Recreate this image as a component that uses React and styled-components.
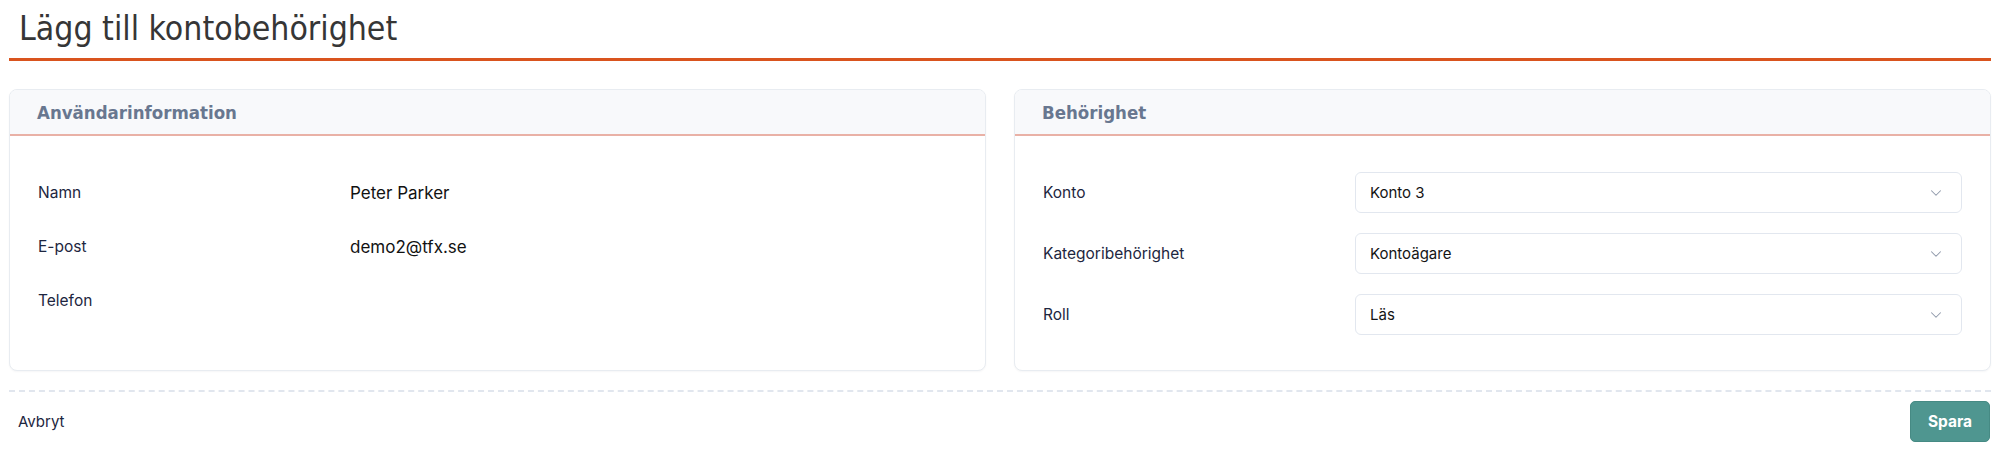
import React from 'react';
import styled, { createGlobalStyle } from 'styled-components';
import { ChevronDown } from 'lucide-react';

const GlobalStyle = createGlobalStyle`
  * { box-sizing: border-box; }
  body {
    margin: 0;
    background: #ffffff;
    font-family: Inter, "Noto Sans", sans-serif;
  }
`;

const userInfo = [
  { label: 'Namn', value: 'Peter Parker' },
  { label: 'E-post', value: 'demo2@tfx.se' },
  { label: 'Telefon', value: '' },
];

const permissions = [
  { label: 'Konto', value: 'Konto 3' },
  { label: 'Kategoribehörighet', value: 'Kontoägare' },
  { label: 'Roll', value: 'Läs' },
];

function App() {
  return (
    <Page>
      <GlobalStyle />
      <Title>Lägg till kontobehörighet</Title>
      <Cards>
        <Card>
          <CardHeader>Användarinformation</CardHeader>
          <CardBody $gap={13}>
            {userInfo.map((row) => (
              <Row key={row.label}>
                <Label>{row.label}</Label>
                <Value>{row.value}</Value>
              </Row>
            ))}
          </CardBody>
        </Card>
        <Card>
          <CardHeader>Behörighet</CardHeader>
          <CardBody $gap={20}>
            {permissions.map((row) => (
              <Row key={row.label}>
                <Label>{row.label}</Label>
                <Select>
                  <span>{row.value}</span>
                  <ChevronDown size={18} strokeWidth={1.4} color="#8f99aa" />
                </Select>
              </Row>
            ))}
          </CardBody>
        </Card>
      </Cards>
      <Footer>
        <CancelLink>Avbryt</CancelLink>
        <SaveButton>Spara</SaveButton>
      </Footer>
    </Page>
  );
}

const Page = styled.div`
  padding: 0 9px;
`;

const Title = styled.h1`
  margin: 0;
  padding: 9px 10px 9px;
  line-height: 40px;
  font-family: "DejaVu Sans Condensed", "DejaVu Sans", sans-serif;
  font-stretch: condensed;
  font-weight: 400;
  font-size: 33.5px;
  color: #363636;
  border-bottom: 3px solid #d9541e;
`;

const Cards = styled.div`
  margin-top: 28px;
  display: grid;
  grid-template-columns: 1fr 1fr;
  gap: 28px;
`;

const Card = styled.section`
  border: 1px solid #e8ecf1;
  border-radius: 8px;
  background: #ffffff;
  box-shadow: 0 1px 2px rgba(15, 23, 42, 0.04);
  overflow: hidden;
`;

const CardHeader = styled.h2`
  margin: 0;
  height: 46px;
  padding: 0 27px;
  display: flex;
  align-items: center;
  background: #f8f9fb;
  border-bottom: 2px solid #e9b1a6;
  font-family: "DejaVu Sans Condensed", "DejaVu Sans", sans-serif;
  font-stretch: condensed;
  font-weight: 700;
  font-size: 18.5px;
  color: #687790;
`;

const CardBody = styled.div`
  padding: 36px 28px 35px;
  display: flex;
  flex-direction: column;
  gap: ${(p) => p.$gap}px;
`;

const Row = styled.div`
  display: grid;
  grid-template-columns: 312px 1fr;
  align-items: center;
  min-height: 41px;
`;

const Label = styled.div`
  font-size: 15.5px;
  color: #1d2640;
`;

const Value = styled.div`
  font-size: 17px;
  color: #121212;
`;

const Select = styled.div`
  height: 41px;
  padding: 0 16px 0 14px;
  display: flex;
  align-items: center;
  justify-content: space-between;
  border: 1px solid #e2e7ef;
  border-radius: 6px;
  background: #ffffff;
  font-size: 15px;
  color: #141414;
`;

const Footer = styled.div`
  margin-top: 19px;
  padding: 9px 1px 0 9px;
  border-top: 2px dashed #e1e6ee;
  display: flex;
  align-items: center;
  justify-content: space-between;
`;

const CancelLink = styled.a`
  font-size: 15px;
  color: #1d2640;
  cursor: pointer;
`;

const SaveButton = styled.button`
  width: 80px;
  height: 41px;
  border: 1px solid #468a84;
  border-radius: 5px;
  background: #4f9690;
  color: #ffffff;
  font-family: Inter, sans-serif;
  font-weight: 700;
  font-size: 15.5px;
  cursor: pointer;
`;

export default App;
